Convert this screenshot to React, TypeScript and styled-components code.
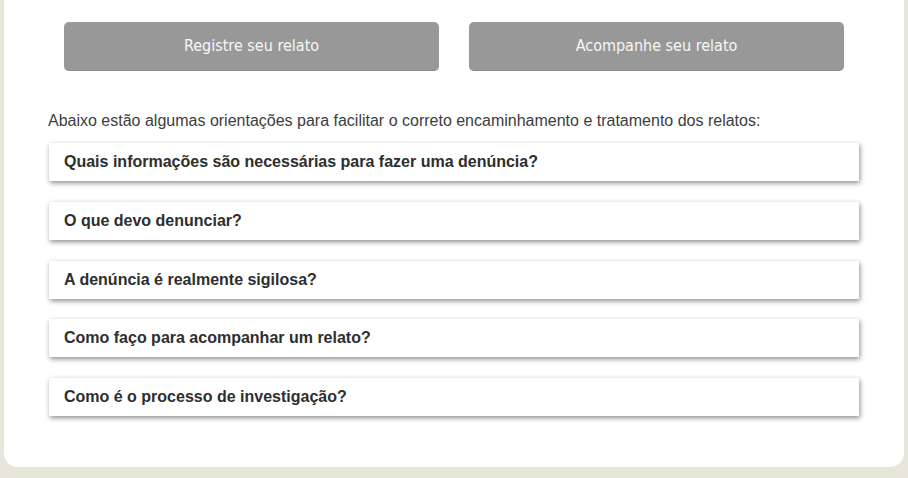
import React from 'react';
import styled, { createGlobalStyle } from 'styled-components';

const GlobalStyle = createGlobalStyle`
  html, body {
    margin: 0;
    padding: 0;
    background: #e7e6da;
    font-family: "Liberation Sans", Arial, sans-serif;
  }
`;

const questions = [
  'Quais informações são necessárias para fazer uma denúncia?',
  'O que devo denunciar?',
  'A denúncia é realmente sigilosa?',
  'Como faço para acompanhar um relato?',
  'Como é o processo de investigação?',
];

const App: React.FC = () => {
  return (
    <>
      <GlobalStyle />
      <Panel>
        <ButtonRow>
          <ActionButton>Registre seu relato</ActionButton>
          <ActionButton>Acompanhe seu relato</ActionButton>
        </ButtonRow>
        <Intro>
          Abaixo estão algumas orientações para facilitar o correto encaminhamento e tratamento dos relatos:
        </Intro>
        <FaqList>
          {questions.map((q) => (
            <FaqItem key={q}>{q}</FaqItem>
          ))}
        </FaqList>
      </Panel>
    </>
  );
};

const Panel = styled.div`
  margin: 0 4px;
  background: #ffffff;
  border-radius: 0 0 14px 14px;
  padding: 22px 0 51px 44px;
  box-sizing: border-box;
`;

const ButtonRow = styled.div`
  display: flex;
  gap: 30px;
  margin-left: 16px;
`;

const ActionButton = styled.button`
  width: 375px;
  height: 49px;
  background: #989898;
  color: #f7f7f7;
  border: none;
  border-radius: 5px;
  border-bottom: 1px solid #8c8c8c;
  font-family: Tahoma, "DejaVu Sans Condensed", "Liberation Sans", sans-serif;
  font-size: 16px;
  padding-bottom: 2px;
  cursor: pointer;
`;

const Intro = styled.p`
  margin: 40px 0 0;
  font-size: 16px;
  line-height: 20px;
  color: #3d3d3d;
`;

const FaqList = styled.div`
  display: flex;
  flex-direction: column;
  gap: 20.75px;
  margin-top: 12px;
  margin-left: 1px;
  width: 810px;
`;

const FaqItem = styled.div`
  height: 38px;
  display: flex;
  align-items: center;
  padding-left: 15px;
  background: #ffffff;
  box-shadow: 1px 2px 5px rgba(0, 0, 0, 0.45);
  font-size: 16px;
  font-weight: bold;
  color: #2e2e2e;
`;

export default App;
